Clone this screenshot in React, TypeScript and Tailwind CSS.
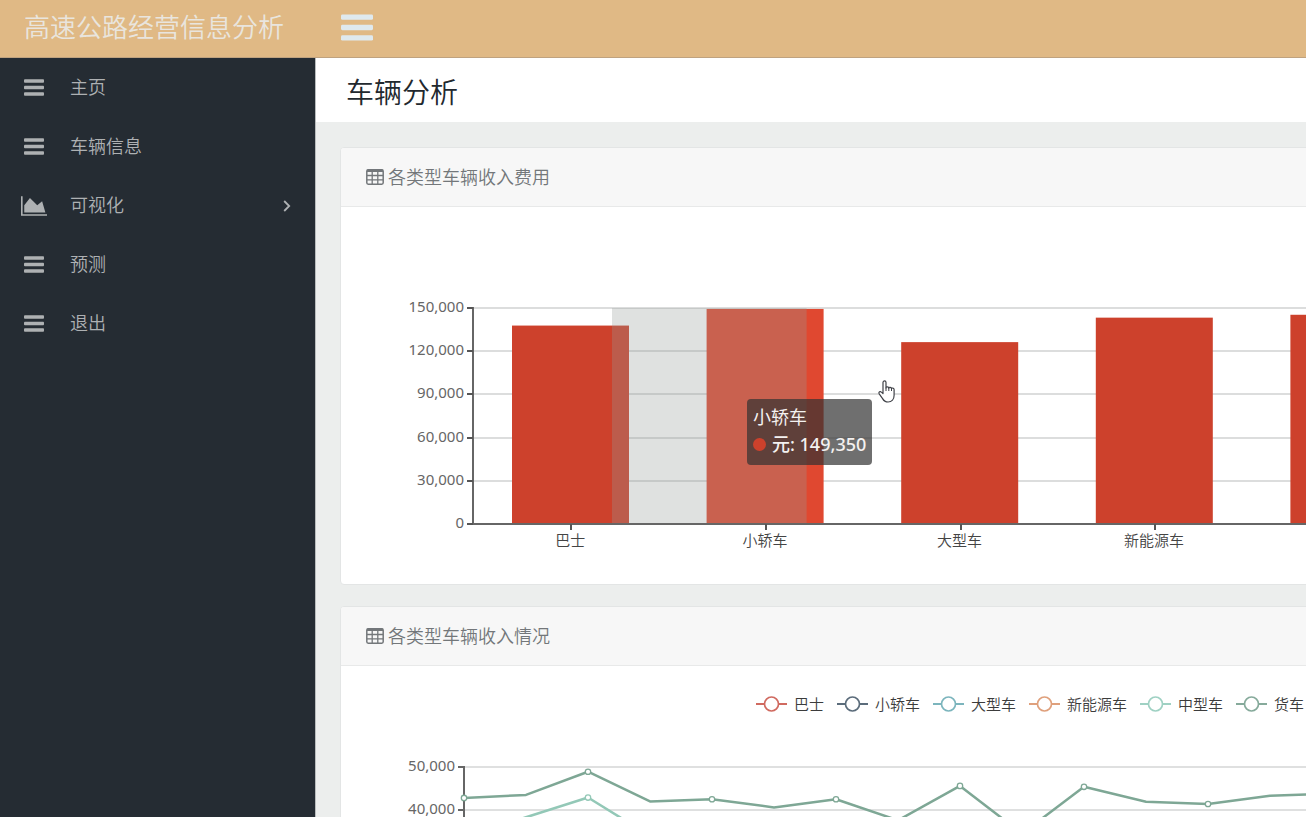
import type { ReactNode } from 'react'

type IconProps = { className?: string }

function BarsIcon({ className }: IconProps) {
  return (
    <svg viewBox="0 0 32 27" className={className} fill="currentColor" aria-hidden="true">
      <rect x="0" y="0.4" width="32" height="5.4" rx="1.4" />
      <rect x="0" y="10.8" width="32" height="5.4" rx="1.4" />
      <rect x="0" y="21.2" width="32" height="5.4" rx="1.4" />
    </svg>
  )
}

function AreaIcon({ className }: IconProps) {
  return (
    <svg viewBox="0 0 2048 1536" className={className} fill="currentColor" aria-hidden="true">
      <path d="M2048 1408v128H0V0h128v1408h1920zM1664 384l256 896H256V704L704 128l576 576z" />
    </svg>
  )
}

function TableIcon({ className }: IconProps) {
  return (
    <svg viewBox="0 0 18 16" className={className} fill="none" stroke="currentColor" aria-hidden="true">
      <rect x="0.8" y="0.8" width="16.4" height="14.4" rx="1.4" strokeWidth="1.5" />
      <path d="M1 1.8h16" strokeWidth="2.4" />
      <path d="M6.2 2v13M11.8 2v13M1 6.5h16M1 10.8h16" strokeWidth="1.3" />
    </svg>
  )
}

function HandCursor() {
  return (
    <svg viewBox="0 0 17 23" className="h-[23px] w-[17px]" aria-hidden="true">
      <path
        d="M5 13.5V2.6C5 .4 8 .4 8 2.6V8c0-1.6 2.8-1.6 2.8.2.2-1.4 2.7-1.2 2.7.5.3-1.1 2.6-.9 2.6.8v5.8c0 4-2.4 6.7-6 6.7-3 0-4.4-1.3-5.5-3.4L1.2 13.8c-.9-1.7 1-2.9 2.2-1.7z"
        fill="#fff"
        stroke="#3f4147"
        strokeWidth="1.2"
        strokeLinejoin="round"
      />
      <path d="M8 7.5v3.5M10.8 8v3M13.5 8.5v2.5" stroke="#3f4147" strokeWidth="1" />
    </svg>
  )
}

const menu = [
  { label: '主页', area: false },
  { label: '车辆信息', area: false },
  { label: '可视化', area: true },
  { label: '预测', area: false },
  { label: '退出', area: false },
]

function Sidebar() {
  return (
    <nav className="w-[316px] shrink-0 border-r border-[#b9bcbd] bg-[#252c33] text-[18px] font-[350] text-[#aeb1b3]">
      <ul>
        {menu.map((m) => (
          <li key={m.label}>
            <a href="#" className="flex h-[59px] items-center pr-6 pl-[21px]">
              <span className="flex w-[26px] justify-center">
                {m.area ? <AreaIcon className="h-5 w-[26px]" /> : <BarsIcon className="h-[17px] w-5" />}
              </span>
              <span className="ml-[23px] grow">{m.label}</span>
              {m.area && (
                <svg viewBox="0 0 8 12" className="h-3 w-2" fill="none" stroke="currentColor" strokeWidth="1.8" aria-hidden="true">
                  <path d="M1.2 1l5 5-5 5" />
                </svg>
              )}
            </a>
          </li>
        ))}
      </ul>
    </nav>
  )
}

function Panel({ title, children }: { title: string; children: ReactNode }) {
  return (
    <section className="overflow-hidden rounded-[4px] border border-[#e3e5e5] bg-white">
      <h2 className="flex h-[59px] items-center gap-1 border-b border-[#e8e9e9] bg-[#f7f7f7] pl-[25px] text-[18px] font-[350] text-[#73777a]">
        <TableIcon className="h-4 w-[18px]" />
        {title}
      </h2>
      {children}
    </section>
  )
}

const vehicles = [
  { name: '巴士', value: 137800 },
  { name: '小轿车', value: 149350 },
  { name: '大型车', value: 126300 },
  { name: '新能源车', value: 143300 },
  { name: '', value: 145300 },
]

const BAR_LEFT = 132
const BAR_BASE = 317
const BAR_HEIGHT = 216
const STEP = 194.6

function BarChart() {
  const y = (v: number) => BAR_BASE - (v / 150000) * BAR_HEIGHT
  return (
    <div className="relative">
      <svg width="1200" height="377" className="block max-w-none" fontSize="15">
        {[30000, 60000, 90000, 120000, 150000].map((v) => (
          <path key={v} d={`M${BAR_LEFT} ${Math.round(y(v))}H1200`} stroke="#dcdddd" strokeWidth="2" />
        ))}
        {vehicles.map((d, i) => (
          <rect
            key={i}
            x={BAR_LEFT + STEP * i + 39}
            y={y(d.value)}
            width="117"
            height={BAR_BASE - y(d.value)}
            fill={i === 1 ? '#e04830' : '#cd412c'}
          />
        ))}
        <rect x="271" y={BAR_BASE - BAR_HEIGHT} width={STEP} height={BAR_HEIGHT} fill="#969a98" fillOpacity="0.3" />
        <path d={`M${BAR_LEFT} ${BAR_BASE - BAR_HEIGHT - 1}V${BAR_BASE}H1200`} fill="none" stroke="#666" strokeWidth="2" />
        {[0, 30000, 60000, 90000, 120000, 150000].map((v) => (
          <g key={v}>
            <path d={`M${BAR_LEFT - 6} ${Math.round(y(v))}h6`} stroke="#555" strokeWidth="2" />
            <text x={BAR_LEFT - 9} y={Math.round(y(v)) + 4} textAnchor="end" fill="#666">
              {v.toLocaleString('en-US')}
            </text>
          </g>
        ))}
        {vehicles.map((d, i) => (
          <g key={i}>
            <path d={`M${Math.round(BAR_LEFT + STEP * (i + 0.5)) + 1} ${BAR_BASE}v6`} stroke="#555" strokeWidth="2" />
            <text x={BAR_LEFT + STEP * (i + 0.5)} y={BAR_BASE + 22} textAnchor="middle" fill="#444" fontWeight="350">
              {d.name}
            </text>
          </g>
        ))}
      </svg>
      <div className="absolute top-[192px] left-[406px] rounded-[4px] bg-[#323232]/70 px-[6px] pt-[5px] pb-[7px] text-[18px] leading-[27px] whitespace-nowrap text-[#f4f1f0]">
        <div>小轿车</div>
        <div className="flex items-center gap-[6px] font-medium">
          <span className="size-[13px] rounded-full bg-[#cd412c]" />
          <span>元: 149,350</span>
        </div>
      </div>
      <div className="absolute top-[173px] left-[537px]">
        <HandCursor />
      </div>
    </div>
  )
}

const legend = [
  { name: '巴士', color: '#d06a60' },
  { name: '小轿车', color: '#5b6c7b' },
  { name: '大型车', color: '#7cb5bd' },
  { name: '新能源车', color: '#dfa07c' },
  { name: '中型车', color: '#9fd1c3' },
  { name: '货车', color: '#86aa9b' },
]

const LINE_LEFT = 123
const LINE_STEP = 62
const truck = [42800, 43500, 48900, 42000, 42500, 40600, 42500, 37600, 45600, 34500, 45400, 41900, 41400, 43300, 43800]
const medium = [34000, 38300, 42900, 34000]

function LineChart() {
  const y = (v: number) => 51 + (50000 - v) * 0.0043
  const px = (i: number) => LINE_LEFT + LINE_STEP * i
  const series = [
    { data: medium, color: '#93c8b7' },
    { data: truck, color: '#7ea795' },
  ]
  return (
    <>
      <div className="flex gap-[13px] pt-[26px] pl-[415px] text-[15px] leading-6 font-[350] whitespace-nowrap text-[#3c3c3c]">
        {legend.map((l) => (
          <button key={l.name} type="button" className="flex shrink-0 items-center gap-[7px]">
            <svg width="31" height="18" fill="none" stroke={l.color} strokeWidth="2" aria-hidden="true">
              <path d="M0 9h8M23 9h8" />
              <circle cx="15.5" cy="9" r="7" strokeWidth="1.7" />
            </svg>
            {l.name}
          </button>
        ))}
      </div>
      <svg width="1200" height="320" className="block max-w-none" fontSize="15">
        {[50000, 40000].map((v) => (
          <g key={v}>
            <path d={`M${LINE_LEFT} ${Math.round(y(v))}H1200`} stroke="#dfe0e0" strokeWidth="2" />
            <path d={`M${LINE_LEFT - 6} ${Math.round(y(v))}h6`} stroke="#666" strokeWidth="2" />
            <text x={LINE_LEFT - 9} y={Math.round(y(v)) + 4} textAnchor="end" fill="#666">
              {v.toLocaleString('en-US')}
            </text>
          </g>
        ))}
        <path d={`M${LINE_LEFT} 50V266`} stroke="#666" strokeWidth="2" />
        {series.map((s) => (
          <g key={s.color} stroke={s.color}>
            <polyline
              points={s.data.map((v, i) => `${px(i)},${y(v)}`).join(' ')}
              fill="none"
              strokeWidth="2.5"
              strokeLinejoin="round"
            />
            {s.data.map((v, i) =>
              i % 2 === 0 ? <circle key={i} cx={px(i)} cy={y(v)} r="2.7" fill="#fff" strokeWidth="1.3" /> : null,
            )}
          </g>
        ))}
      </svg>
    </>
  )
}

export default function App() {
  return (
    <div className="flex h-screen flex-col overflow-hidden bg-[#eceeed] font-['Noto_Sans','Noto_Sans_CJK_SC',sans-serif]">
      <header className="flex h-[58px] shrink-0 items-center border-b border-[#bfa27f] bg-[#e0b985] pb-[3px]">
        <a href="#" className="w-[341px] shrink-0 pl-6 text-[26px] font-[350] whitespace-nowrap text-[#e9e5de]">
          高速公路经营信息分析
        </a>
        <button type="button" aria-label="菜单" className="text-[#dfe9ee]">
          <BarsIcon className="h-[27px] w-8" />
        </button>
      </header>
      <div className="flex min-h-0 grow">
        <Sidebar />
        <main className="min-w-0 grow overflow-hidden">
          <h1 className="flex h-16 items-center bg-white pt-1 pl-[30px] text-[28px] font-[350] text-[#22282e]">车辆分析</h1>
          <div className="-mr-2 flex flex-col gap-[21px] pt-[25px] pl-6">
            <Panel title="各类型车辆收入费用">
              <BarChart />
            </Panel>
            <Panel title="各类型车辆收入情况">
              <LineChart />
            </Panel>
          </div>
        </main>
      </div>
    </div>
  )
}
